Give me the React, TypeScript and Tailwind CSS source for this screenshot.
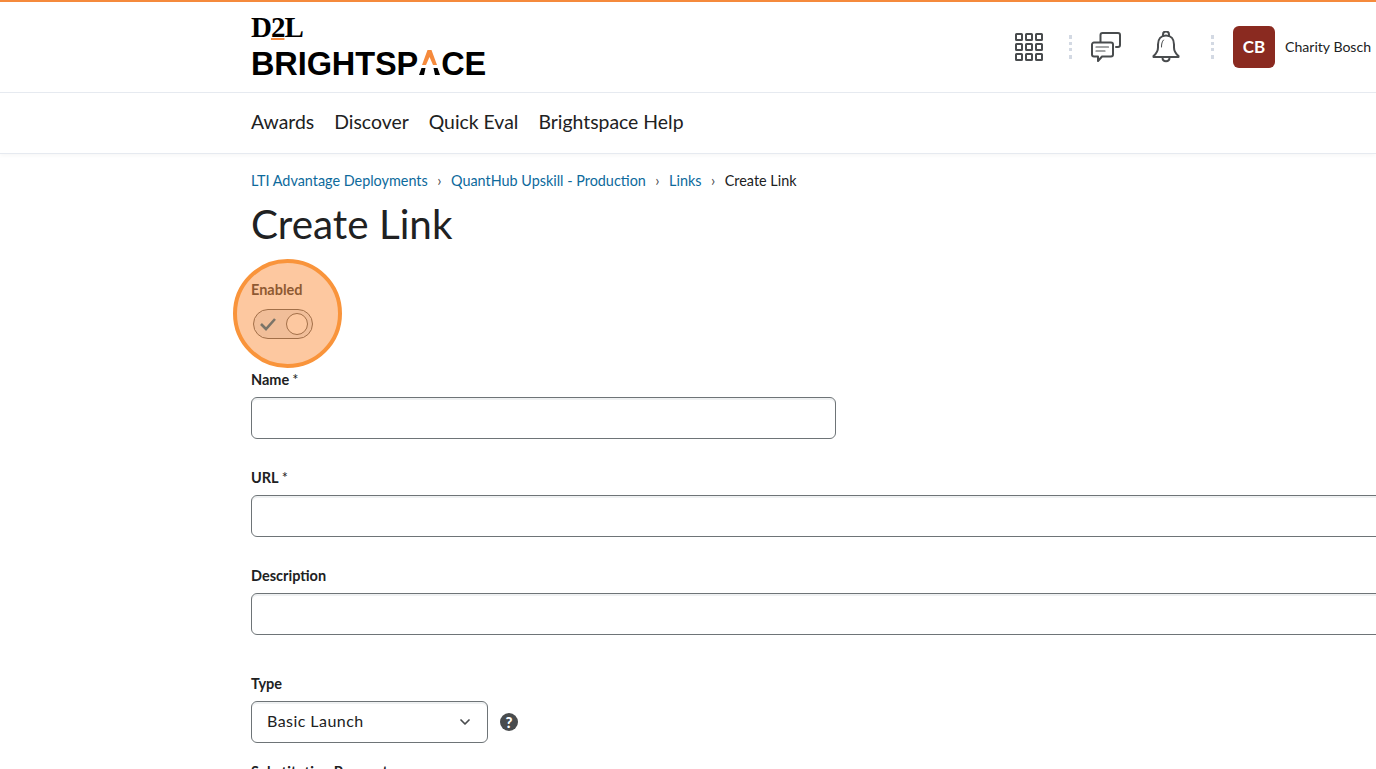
import { ChevronDown } from "lucide-react";

const lato = { fontFamily: "Lato, sans-serif" };

function Field({ label, required, wide }: { label: string; required?: boolean; wide?: boolean }) {
  return (
    <div className="h-[98px]">
      <div className="h-[29px] text-[14.5px] leading-[17px] font-bold text-[#202122] pt-[3px]">
        {label}
        {required && <span className="font-normal ml-[3px]">*</span>}
      </div>
      <div
        className={`h-[42px] rounded-md border border-[#6e7477] bg-white shadow-[inset_0_2px_0_0_rgba(177,185,190,0.2)] ${
          wide ? "w-[1300px]" : "w-[585px]"
        }`}
      />
    </div>
  );
}

function Crumb({ text }: { text: string }) {
  return (
    <>
      <span className="text-[#0d6a9c]">{text}</span>
      <span className="mx-[9.5px] text-[#494c4e] text-[15px]">›</span>
    </>
  );
}

function Dots() {
  return <div className="h-[24px] border-l-[3px] border-dotted border-[#d3d9e3]" />;
}

function GridIcon() {
  const cells = [0, 1, 2, 3, 4, 5, 6, 7, 8];
  return (
    <div className="grid grid-cols-3 gap-x-[2px] gap-y-[2px] w-[28px]">
      {cells.map((c) => (
        <div key={c} className="h-[8px] w-[8px] rounded-[1.5px] border-[2px] border-[#494c4e]" />
      ))}
    </div>
  );
}

function ChatIcon() {
  return (
    <svg width="30" height="30" viewBox="0 0 30 30" fill="none" stroke="#494c4e" strokeWidth="2" strokeLinejoin="round" strokeLinecap="round">
      <path d="M9.500 10V3a2 2 0 0 1 2-2H27a2 2 0 0 1 2 2v10a2 2 0 0 1-2 2h-2" />
      <path d="M3 10.500h17a2 2 0 0 1 2 2v10a2 2 0 0 1-2 2H11l-4 4.500v-4.500H3a2 2 0 0 1-2-2v-10a2 2 0 0 1 2-2z" />
      <path d="M5 15h12.500M5 19h9" strokeWidth="1.200" />
    </svg>
  );
}

function BellIcon() {
  return (
    <svg width="28" height="32" viewBox="0 0 28 32" fill="none" stroke="#494c4e" strokeWidth="2" strokeLinejoin="round" strokeLinecap="round">
      <path d="M11 5V3.500a3 3 0 0 1 6 0V5" />
      <path d="M14 4.500c-5 0-8 3.500-8 9v3c0 3-1.500 6-4.500 8.500v1h25v-1c-3-2.500-4.500-5.500-4.500-8.500v-3c0-5.500-3-9-8-9z" />
      <path d="M10.500 26.500c0 2.500 1.500 3.800 3.500 3.800s3.500-1.300 3.500-3.800" />
      <path d="M11.500 9c-1.500 1.500-2 4-2 7" strokeWidth="1" />
    </svg>
  );
}

export default function App() {
  return (
    <div className="relative h-[769px] w-[1376px] overflow-hidden bg-white text-[#202122]" style={lato}>
      {/* Cabecera */}
      <header className="h-[93px] border-t-2 border-b border-t-[#f58a3c] border-b-[#e6eaf0] pl-[251px] flex items-start">
        <div className="pt-[12px] w-[240px]">
          <div className="text-[29px] leading-[26px] font-bold tracking-[-1px] text-black" style={{ fontFamily: '"Liberation Serif", serif' }}>
            D<span className="underline decoration-[#f58a3c] decoration-2 underline-offset-[1px]">2</span>L
          </div>
          <div className="mt-[8px] text-[32.500px] leading-[32px] font-bold tracking-[-0.1px] text-black flex" style={{ fontFamily: '"Liberation Sans", sans-serif' }}>
            BRIGHTSP
            <span className="relative w-[23px]">
              <svg className="absolute left-0 top-[2px]" width="23" height="26" viewBox="0 0 23 26">
                <path d="M9.500 0 L13.500 0 L19 15 L15 15 L11.500 7 L8 15 L4 15 Z" fill="#f58a3c" />
                <path d="M1 25 L3.500 18 L7.500 18 L6 25 Z M15.500 18 L19.500 18 L22 25 L17 25 Z" fill="#000" />
              </svg>
            </span>
            CE
          </div>
        </div>
        <div className="ml-auto flex items-center h-[90px]">
          <GridIcon />
          <div className="ml-[26px] mr-[19px]"><Dots /></div>
          <ChatIcon />
          <div className="ml-[31px]"><BellIcon /></div>
          <div className="ml-[31px]"><Dots /></div>
          <div className="ml-[19px] h-[42px] w-[42px] pb-[1px] rounded-md bg-[#8a2a20] text-white font-bold text-[17px] flex items-center justify-center">CB</div>
          <span className="ml-[10px] w-[86px] mr-[5px] text-[14.100px] whitespace-nowrap text-[#202122]">Charity Bosch</span>
        </div>
      </header>

      {/* Navegacion */}
      <nav className="h-[61px] pb-[2px] border-b border-[#e6eaf0] shadow-[0_2px_4px_rgba(0,0,0,0.03)] pl-[251px] flex items-center gap-[20px] text-[19.400px] text-[#202122]">
        <span>Awards</span>
        <span>Discover</span>
        <span>Quick Eval</span>
        <span>Brightspace Help</span>
      </nav>

      {/* Contenido */}
      <main className="pl-[251px]">
        <div className="pt-[8px] h-[44px] text-[14.400px] leading-[17px] flex items-center">
          <Crumb text="LTI Advantage Deployments" />
          <Crumb text="QuantHub Upskill - Production" />
          <Crumb text="Links" />
          <span>Create Link</span>
        </div>
        <h1 className="text-[40.400px] leading-[48px] mt-[2px] font-normal text-[#202122]">Create Link</h1>

        <div className="mt-[33px] h-[87px]">
          <div className="text-[14.500px] leading-[17px] font-bold text-[#202122]">Enabled</div>
          <div className="ml-[2px] mt-[11px] h-[30px] w-[60px] rounded-full border border-[#494c4e] bg-[#e6eaf0] flex items-center justify-between pl-[5px] pr-[4px]">
            <svg className="relative z-10" width="18" height="14" viewBox="0 0 18 14" fill="none" stroke="#7b7468" strokeWidth="2.600">
              <path d="M2 7l5 5 9-10" />
            </svg>
            <div className="h-[22px] w-[22px] rounded-full border border-[#494c4e] bg-white" />
          </div>
        </div>

        <Field label="Name" required />
        <Field label="URL" required wide />
        <Field label="Description" wide />

        <div className="mt-[10px] h-[29px] text-[14.500px] leading-[17px] font-bold pt-[3px]">Type</div>
        <div className="flex items-center">
          <div className="h-[42px] w-[237px] rounded-md border border-[#6e7477] bg-white shadow-[inset_0_2px_0_0_rgba(177,185,190,0.2)] flex items-center justify-between pl-[15px] pr-[14px] text-[16px] tracking-[0.45px] text-[#202122]">
            <span className="pb-[2px]">Basic Launch</span>
            <ChevronDown size={16} strokeWidth={2.6} color="#494c4e" />
          </div>
          <div className="ml-[12px] h-[18px] w-[18px] rounded-full bg-[#494c4e] text-white text-[15px] leading-[18px] font-black flex items-center justify-center">?</div>
        </div>
        <div className="mt-[20px] text-[14.500px] leading-[17px] font-bold">Substitution Parameters</div>
      </main>

      {/* Resaltado */}
      <div className="absolute left-[233px] top-[259px] h-[109px] w-[109px] rounded-full border-[4px] border-[#f9943b] bg-[#fb9141]/50" />
    </div>
  );
}
